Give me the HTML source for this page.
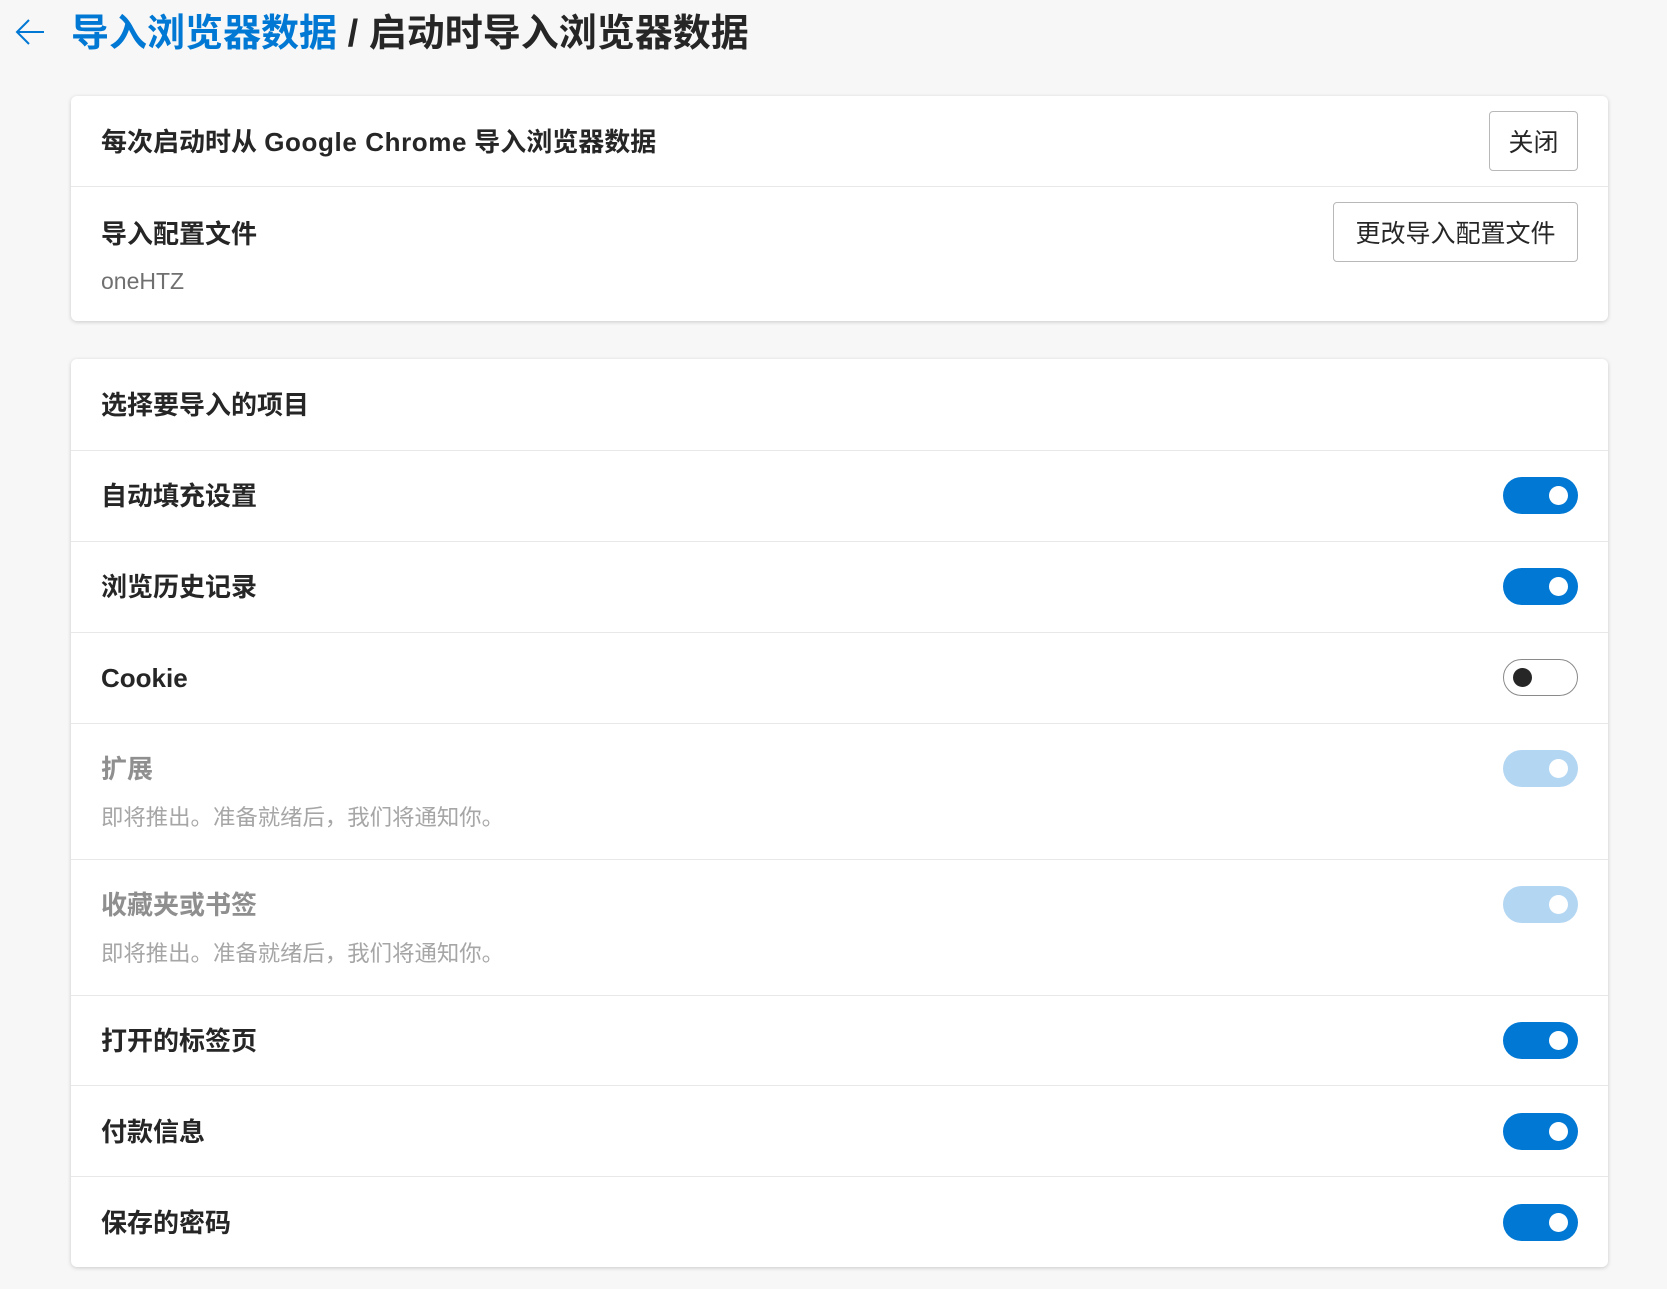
<!DOCTYPE html>
<html><head><meta charset="utf-8"><style>
*{margin:0;padding:0;box-sizing:border-box}
body{width:1667px;height:1289px;background:#f7f7f7;font-family:"Liberation Sans","Noto Sans CJK SC",sans-serif;color:#262626;position:relative;overflow:hidden}
.abs{position:absolute}
.t{position:absolute;white-space:nowrap;line-height:1}
.card{position:absolute;left:71px;width:1537px;background:#fff;border-radius:6px;box-shadow:0 1px 4px rgba(0,0,0,.18)}
.hr{position:absolute;left:0;right:0;height:1px;background:#e8e8e8}
.lbl{font-size:26px;font-weight:bold;left:30px}
.sub{font-size:22.4px;color:#a6a6a6;left:30px}
.btn{position:absolute;border:1px solid #b8b8b8;border-radius:4px;background:#fff;font-size:25px;color:#262626;display:flex;align-items:center;justify-content:center}
.tg{position:absolute;left:1432px;width:75px;height:37px;border-radius:19px;background:#0078d4}
.tg::after{content:"";position:absolute;right:10px;top:9px;width:19px;height:19px;border-radius:50%;background:#fff}
.tg.dis{background:#b3d6f2}
.tg.off{background:#fff;border:1px solid #8a8a8a}
.tg.off::after{left:9px;right:auto;top:8px;background:#262626}
</style></head><body>
<svg class="abs" style="left:14px;top:16px" width="32" height="32" viewBox="0 0 32 32"><path d="M30 16H3M15 4L3 16l12 12" fill="none" stroke="#0078d4" stroke-width="2"/></svg>
<div class="t" style="left:71px;top:15px;font-size:38px;font-weight:bold"><span style="color:#0078d4">导入浏览器数据</span>&nbsp;/ 启动时导入浏览器数据</div>

<div class="card" style="top:96px;height:225px">
  <div class="t lbl" style="top:33px">每次启动时从 <span style="letter-spacing:0.6px">Google Chrome</span> 导入浏览器数据</div>
  <div class="btn" style="left:1418px;top:15px;width:89px;height:60px">关闭</div>
  <div class="hr" style="top:90px"></div>
  <div class="t lbl" style="top:125px">导入配置文件</div>
  <div class="t" style="left:30px;top:174px;font-size:23px;color:#707070">oneHTZ</div>
  <div class="btn" style="left:1262px;top:106px;width:245px;height:60px">更改导入配置文件</div>
</div>

<div class="card" style="top:359px;height:908px">
  <div class="t lbl" style="top:33px">选择要导入的项目</div>
  <div class="hr" style="top:91px"></div>
  <div class="t lbl" style="top:124px">自动填充设置</div><div class="tg" style="top:118px"></div>
  <div class="hr" style="top:182px"></div>
  <div class="t lbl" style="top:215px">浏览历史记录</div><div class="tg" style="top:209px"></div>
  <div class="hr" style="top:273px"></div>
  <div class="t lbl" style="top:306px">Cookie</div><div class="tg off" style="top:300px"></div>
  <div class="hr" style="top:364px"></div>
  <div class="t lbl" style="top:397px;color:#8f8f8f">扩展</div><div class="tg dis" style="top:391px"></div>
  <div class="t sub" style="top:448px">即将推出。准备就绪后，我们将通知你。</div>
  <div class="hr" style="top:500px"></div>
  <div class="t lbl" style="top:533px;color:#8f8f8f">收藏夹或书签</div><div class="tg dis" style="top:527px"></div>
  <div class="t sub" style="top:584px">即将推出。准备就绪后，我们将通知你。</div>
  <div class="hr" style="top:636px"></div>
  <div class="t lbl" style="top:669px">打开的标签页</div><div class="tg" style="top:663px"></div>
  <div class="hr" style="top:726px"></div>
  <div class="t lbl" style="top:760px">付款信息</div><div class="tg" style="top:754px"></div>
  <div class="hr" style="top:817px"></div>
  <div class="t lbl" style="top:851px">保存的密码</div><div class="tg" style="top:845px"></div>
</div>
</body></html>
